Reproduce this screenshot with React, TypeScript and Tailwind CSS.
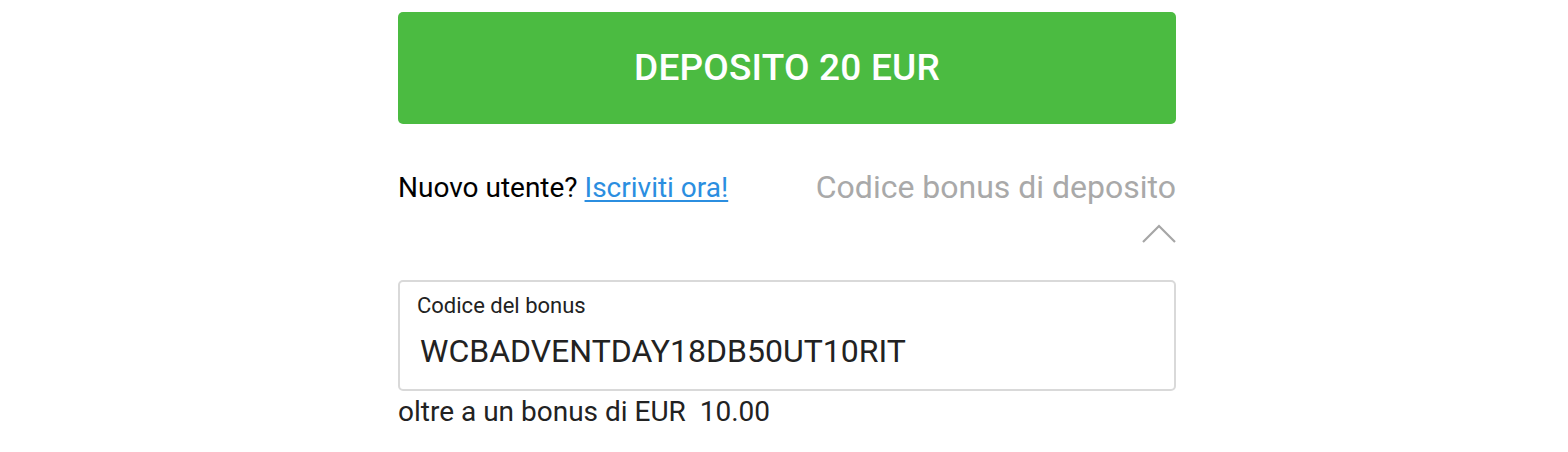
import React from 'react';

const ChevronUp: React.FC = () => (
  <svg width="34" height="19" viewBox="0 0 34 19" fill="none" className="block">
    <path d="M1 18L17 2L33 18" stroke="#a6a6a6" strokeWidth="2.2" />
  </svg>
);

const App: React.FC = () => {
  return (
    <div className="w-full min-h-[452px] bg-white flex justify-center pl-[6px]" style={{ fontFamily: 'Roboto, "Liberation Sans", sans-serif' }}>
      <div className="w-[778px] pt-[12px]">
        {/* Deposit button */}
        <button className="w-full h-[112px] rounded-[5px] bg-[#4bbb41] text-white text-[37px] font-medium tracking-[0.2px]">
          DEPOSITO 20 EUR
        </button>

        {/* Register + bonus code toggle */}
        <div className="mt-[43px] flex justify-between items-start">
          <div className="text-[28px] leading-[36px] text-black mt-[3px]">
            Nuovo utente?{' '}
            <a href="#" className="text-[#2b8ee0] underline underline-offset-[3px]">Iscriviti ora!</a>
          </div>
          <div className="flex flex-col items-end">
            <span className="text-[32px] leading-[40px] text-[#a9a9a9]">Codice bonus di deposito</span>
            <div className="mt-[17px]">
              <ChevronUp />
            </div>
          </div>
        </div>

        {/* Bonus code input */}
        <div className="mt-[37px] h-[111px] border-2 border-[#d9d9d9] rounded-[5px] px-[17px] pt-[10px]">
          <div className="text-[22px] leading-[28px] text-[#222]">Codice del bonus</div>
          <div className="mt-[11px] pl-[3px] text-[32px] leading-[40px] text-[#222]">WCBADVENTDAY18DB50UT10RIT</div>
        </div>

        <div className="mt-[3px] text-[28px] leading-[36px] text-[#222] whitespace-pre">oltre a un bonus di EUR  10.00</div>
      </div>
    </div>
  );
};

export default App;
